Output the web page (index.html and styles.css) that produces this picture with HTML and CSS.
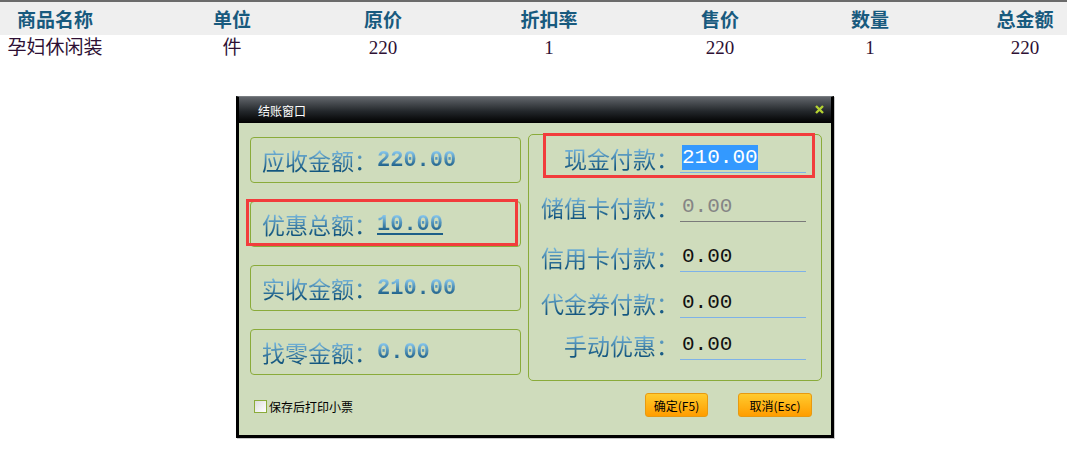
FILE: index.html
```html
<!DOCTYPE html>
<html lang="zh-CN">
<head>
    <meta charset="UTF-8">
    <title>结账窗口</title>
    <link rel="stylesheet" href="styles.css">
</head>
<body>
    <div class="goods">
        <div class="goods-row goods-head">
            <div>商品名称</div>
            <div>单位</div>
            <div>原价</div>
            <div>折扣率</div>
            <div>售价</div>
            <div>数量</div>
            <div>总金额</div>
        </div>
        <div class="goods-row goods-item">
            <div>孕妇休闲装</div>
            <div>件</div>
            <div>220</div>
            <div>1</div>
            <div>220</div>
            <div>1</div>
            <div>220</div>
        </div>
    </div>

    <div class="dialog">
        <div class="dialog-title">
            <span>结账窗口</span>
            <svg class="dialog-close" width="9" height="9" viewBox="0 0 9 9">
                <path d="M1 1 L8 8 M8 1 L1 8" stroke="#b4d232" stroke-width="2.4" fill="none"/>
            </svg>
        </div>
        <div class="dialog-body">
            <div class="totals">
                <div class="total-box">
                    <span class="grad">应收金额：</span><span class="grad num">220.00</span>
                </div>
                <div class="total-box">
                    <span class="grad">优惠总额：</span><span class="grad num link">10.00</span>
                    <div class="mark mark-left"></div>
                </div>
                <div class="total-box">
                    <span class="grad">实收金额：</span><span class="grad num">210.00</span>
                </div>
                <div class="total-box">
                    <span class="grad">找零金额：</span><span class="grad num">0.00</span>
                </div>
            </div>
            <div class="pay-panel">
                <div class="mark mark-right"></div>
                <div class="pay-row">
                    <span class="pay-label grad">现金付款：</span>
                    <div class="pay-input"><span class="selected">210.00</span></div>
                </div>
                <div class="pay-row">
                    <span class="pay-label grad">储值卡付款：</span>
                    <div class="pay-input disabled">0.00</div>
                </div>
                <div class="pay-row">
                    <span class="pay-label grad">信用卡付款：</span>
                    <div class="pay-input">0.00</div>
                </div>
                <div class="pay-row">
                    <span class="pay-label grad">代金券付款：</span>
                    <div class="pay-input">0.00</div>
                </div>
                <div class="pay-row">
                    <span class="pay-label grad">手动优惠：</span>
                    <div class="pay-input">0.00</div>
                </div>
            </div>
        </div>
        <div class="dialog-foot">
            <label class="print-check"><span class="check-box"></span>保存后打印小票</label>
            <div class="buttons">
                <button class="btn">确定(F5)</button>
                <button class="btn btn-cancel">取消(Esc)</button>
            </div>
        </div>
    </div>
</body>
</html>
```

FILE: styles.css
```css
body {
    margin: 0;
    background: #fff;
    font-family: "Liberation Serif", "Noto Sans CJK SC", serif;
}
.goods {
    border-top: 2px solid #6b6b6b;
}
.goods-row {
    display: grid;
    grid-template-columns: 110px 244px 58px 274px 68px 232px 78px;
    text-align: center;
    white-space: nowrap;
}
.goods-head {
    background: #efefef;
    height: 33px;
    line-height: 33px;
    font-family: "Noto Sans CJK SC", sans-serif;
    font-size: 19px;
    font-weight: bold;
    color: #185a7e;
}
.goods-item {
    height: 26px;
    line-height: 26px;
    font-size: 19px;
    color: #2e1034;
}

/* checkout window */
.dialog {
    position: absolute;
    left: 236px;
    top: 96px;
    width: 592px;
    border: 3px solid #000;
    border-top: 1px solid #7a7e82;
    box-shadow: 1px 1px 0 #c8c8c8;
    background: #cfdcbc;
}
.dialog-title {
    height: 26px;
    display: flex;
    align-items: center;
    justify-content: space-between;
    padding: 0 7px 0 19px;
    background: linear-gradient(#62666b, #23272b 55%, #000);
    color: #fff;
    font-family: "Noto Sans CJK SC", sans-serif;
    font-size: 12px;
}
.dialog-close {
    margin-top: -2px;
}
.dialog-body {
    display: grid;
    grid-template-columns: 271px 294px;
    gap: 7px;
    padding: 11px 9px 0 11px;
}
.totals {
    display: flex;
    flex-direction: column;
    gap: 18px;
    padding-top: 3px;
}
.total-box {
    position: relative;
    height: 44px;
    display: flex;
    align-items: center;
    padding-left: 11px;
    border: 1px solid #8aab3a;
    border-radius: 4px;
    font-family: "Noto Sans CJK SC", sans-serif;
    font-size: 23px;
}
.grad {
    background: linear-gradient(#8ccbf0 10%, #13567f 80%);
    -webkit-background-clip: text;
    background-clip: text;
    color: transparent;
}
.num {
    font-family: "Liberation Mono", monospace;
    font-size: 22px;
    font-weight: bold;
}
.link {
    text-decoration: underline;
    text-decoration-color: #1d5f88;
    text-decoration-thickness: 2px;
    text-underline-offset: 3px;
}
.mark {
    position: absolute;
    border: 3px solid #f23c3c;
    pointer-events: none;
}
.mark-left {
    left: -5px;
    top: -3px;
    width: 266px;
    height: 41px;
}
.mark-right {
    left: 14px;
    top: -2px;
    width: 266px;
    height: 39px;
}
.pay-panel {
    position: relative;
    height: 237px;
    border: 1px solid #8aab3a;
    border-radius: 5px;
    padding-top: 8px;
}
.pay-row {
    display: flex;
    align-items: center;
    height: 30px;
}
.pay-row:nth-child(3) { margin-top: 19px; }
.pay-row:nth-child(4) { margin-top: 20px; }
.pay-row:nth-child(5) { margin-top: 16px; }
.pay-row:nth-child(6) { margin-top: 12px; }
.pay-label {
    width: 150px;
    text-align: right;
    font-family: "Noto Sans CJK SC", sans-serif;
    font-size: 23px;
    white-space: nowrap;
}
.pay-input {
    width: 124px;
    height: 29px;
    line-height: 29px;
    margin-left: 1px;
    padding-left: 2px;
    border-bottom: 1px solid #7eb2e8;
    font-family: "Liberation Mono", monospace;
    font-size: 21px;
    color: #111;
}
.pay-input.disabled {
    color: #858585;
    border-bottom-color: #7a7a7a;
}
.selected {
    background: #3399ff;
    color: #fff;
    padding: 1px 0;
}
.dialog-foot {
    display: flex;
    align-items: center;
    justify-content: space-between;
    padding: 12px 19px 18px 15px;
}
.print-check {
    display: flex;
    align-items: center;
    gap: 2px;
    font-family: "Noto Sans CJK SC", sans-serif;
    font-size: 12px;
    color: #000;
    margin-top: 2px;
}
.check-box {
    width: 11px;
    height: 11px;
    border: 1px solid #8aab3a;
    background: linear-gradient(135deg, #ddd, #fff);
}
.buttons {
    display: flex;
    gap: 30px;
}
.btn {
    height: 24px;
    width: 63px;
    padding: 0;
    border: 1px solid #e89a10;
    border-radius: 3px;
    background: linear-gradient(#ffcb2e, #ff9d00);
    font-family: "Noto Sans CJK SC", sans-serif;
    font-size: 12px;
    color: #000;
}
.btn-cancel {
    width: 74px;
}
```
